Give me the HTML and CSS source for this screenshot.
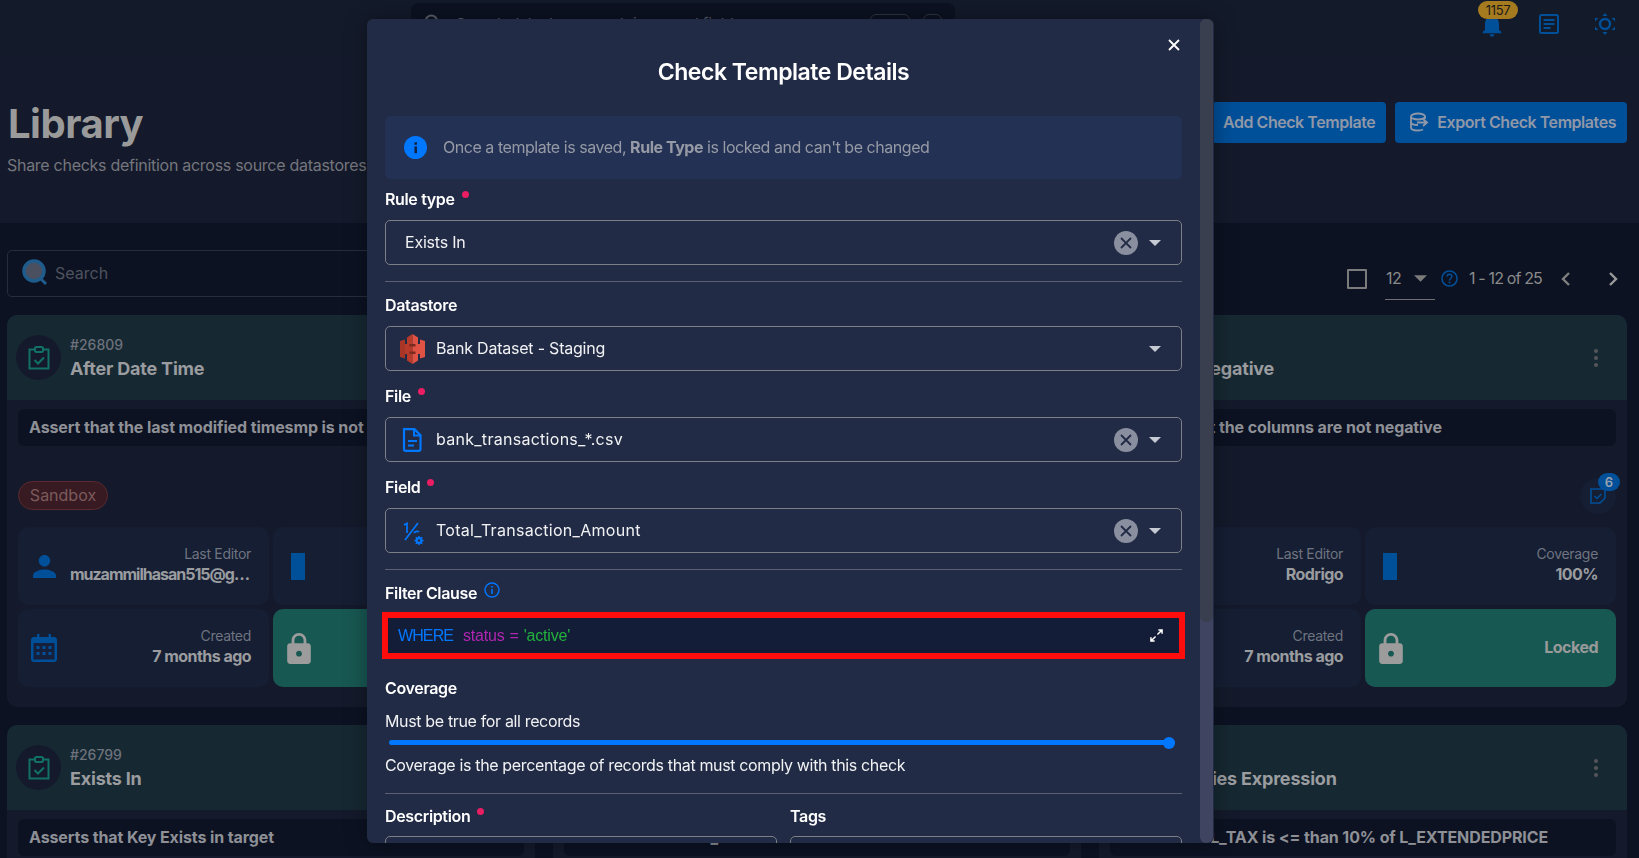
FILE: index.html
```html
<!DOCTYPE html>
<html lang="en">
<head>
    <meta charset="UTF-8">
    <meta name="viewport" content="width=device-width, initial-scale=1.0">
    <title>Library</title>
    <link rel="stylesheet" href="styles.css">
</head>
<body>
    <div class="page">
        <header class="topbar">
            <div class="global-search">
                <svg class="global-search-icon" viewBox="0 0 24 24" width="20" height="20"><circle cx="10" cy="10" r="7" fill="none" stroke="#5a5e69" stroke-width="2.4"/><path d="M15 15l6 6" stroke="#5a5e69" stroke-width="2.4"/></svg>
                <span class="global-search-text">Search datastores, containers and fields</span>
                <span class="kbd kbd-wide"></span>
                <span class="kbd"></span>
            </div>
            <div class="topbar-icons">
                <div class="bell">
                    <svg viewBox="0 0 24 24" width="28" height="28"><path fill="#004f99" d="M12 22c1.1 0 2-.9 2-2h-4c0 1.1.89 2 2 2zm6-6v-5c0-3.07-1.64-5.64-4.5-6.32V4c0-.83-.67-1.5-1.5-1.5s-1.5.67-1.5 1.5v.68C7.63 5.36 6 7.92 6 11v5l-2 2v1h16v-1l-2-2z"/></svg>
                    <span class="bell-badge">1157</span>
                </div>
                <svg class="doc-icon" viewBox="0 0 20 20" width="20" height="20"><rect x="1" y="1" width="18" height="18" rx="1.5" fill="none" stroke="#004f99" stroke-width="2"/><path d="M4.5 6h11M4.5 10h11M4.5 14h7" stroke="#004f99" stroke-width="2"/></svg>
                <svg class="sun-icon" viewBox="0 0 24 24" width="24" height="24"><circle cx="12" cy="12" r="5" fill="none" stroke="#004f99" stroke-width="2.4"/><path fill="#004f99" d="M12 1l2.5 3h-5zM12 23l-2.5-3h5zM2 6h3.5L2 9.5zM22 6h-3.5L22 9.500zM2 18h3.500L2 14.500zM22 18h-3.500L22 14.500z"/></svg>
            </div>
        </header>

        <section class="page-head">
            <div>
                <h1>Library</h1>
                <p class="subtitle">Share checks definition across source datastores</p>
            </div>
            <div class="head-actions">
                <button class="btn">Add Check Template</button>
                <button class="btn">
                    <svg viewBox="0 0 22 20" width="22" height="20"><ellipse cx="9" cy="4.500" rx="7" ry="3" fill="none" stroke="#9098a8" stroke-width="1.800"/><path d="M2 4.500v11c0 1.700 3 3 7 3 2 0 3.500-.3 5-1M2 10c0 1.700 3 3 7 3M16 4.500V7" fill="none" stroke="#9098a8" stroke-width="1.800"/><path d="M8 10.500h9M14 7l4 3.500-4 3.500" fill="none" stroke="#9098a8" stroke-width="1.800"/></svg>
                    Export Check Templates
                </button>
            </div>
        </section>

        <section class="toolbar">
            <div class="search">
                <svg viewBox="0 0 26 28" width="26" height="28"><circle cx="12" cy="12" r="10" fill="#4a5060"/><circle cx="12" cy="12" r="10" fill="none" stroke="#1f5c8c" stroke-width="3.500"/><path d="M19 20l5 5" stroke="#1f5c8c" stroke-width="3"/></svg>
                <span>Search</span>
            </div>
            <div class="controls">
                <span class="checkbox"></span>
                <div class="page-size"><span>12</span><svg viewBox="0 0 12 6" width="13" height="7"><path fill="#7b7b7b" d="M0 0h12L6 6z"/></svg></div>
                <svg class="help-icon" viewBox="0 0 18 18" width="17" height="17"><circle cx="9" cy="9" r="8" fill="none" stroke="#004f99" stroke-width="1.600"/><path d="M6.500 7c0-3.300 5-3.300 5 0 0 2-2.500 2-2.500 4" fill="none" stroke="#004f99" stroke-width="1.500"/><circle cx="9" cy="13.300" r="1" fill="#004f99"/></svg>
                <span class="range">1 - 12 of 25</span>
                <svg class="chev chev-prev" viewBox="0 0 10 14" width="10" height="14"><path d="M8 1L2 7l6 6" fill="none" stroke="#7f7f7f" stroke-width="2.400"/></svg>
                <svg class="chev chev-next" viewBox="0 0 10 14" width="10" height="14"><path d="M2 1l6 6-6 6" fill="none" stroke="#9a9a9a" stroke-width="2.400"/></svg>
            </div>
        </section>

        <section class="cards">
            <article class="card">
                <div class="card-head">
                    <div class="card-icon"><svg viewBox="0 0 22 24" width="22" height="24"><path d="M7 3.500H1.500v19h19v-19H15" fill="none" stroke="#127166" stroke-width="2"/><rect x="7" y="1" width="8" height="5" rx="1.500" fill="none" stroke="#127166" stroke-width="2"/><path d="M6.500 14l3.500 3.500 6-6" fill="none" stroke="#127166" stroke-width="2"/></svg></div>
                    <div class="card-heading"><div class="card-id">#26809</div><div class="card-title">After Date Time</div></div>
                </div>
                <div class="card-body">
                    <div class="card-desc">Assert that the last modified timesmp is not in the future</div>
                    <div class="tag-row"><span class="tag">Sandbox</span></div>
                    <div class="stats">
                        <div class="stat">
                            <svg viewBox="4 4 16 16" width="23" height="23"><path fill="#004f99" d="M12 12c2.210 0 4-1.790 4-4s-1.790-4-4-4-4 1.790-4 4 1.790 4 4 4zm0 2c-2.670 0-8 1.340-8 4v2h16v-2c0-2.660-5.330-4-8-4z"/></svg>
                            <div class="stat-text"><div class="stat-label">Last Editor</div><div class="stat-value stat-clip">muzammilhasan515@g…</div></div>
                        </div>
                        <div class="stat"><span class="bar-icon"></span></div>
                        <div class="stat stat-created">
                            <svg viewBox="0 0 26 28" width="26" height="28"><path fill="#004f99" d="M3 3h3V0h2.500v3h9V0H20v3h3c1.700 0 3 1.300 3 3v19c0 1.700-1.300 3-3 3H3c-1.700 0-3-1.300-3-3V6c0-1.700 1.300-3 3-3z"/><rect x="2.500" y="9" width="21" height="16.500" fill="#14203c"/><path fill="#004f99" d="M5.500 12h3v3h-3zM11.500 12h3v3h-3zM17.500 12h3v3h-3zM5.500 18h3v3h-3zM11.500 18h3v3h-3zM17.500 18h3v3h-3z"/></svg>
                            <div class="stat-text"><div class="stat-label">Created</div><div class="stat-value">7 months ago</div></div>
                        </div>
                        <div class="stat stat-locked">
                            <svg viewBox="4 1 16 21" width="24" height="31"><path fill="#9c9c9c" d="M18 8h-1V6c0-2.760-2.240-5-5-5S7 3.240 7 6v2H6c-1.100 0-2 .9-2 2v10c0 1.100.9 2 2 2h12c1.100 0 2-.9 2-2V10c0-1.100-.9-2-2-2zm-6 9c-1.100 0-2-.9-2-2s.9-2 2-2 2 .9 2 2-.9 2-2 2zm3.100-9H8.900V6c0-1.710 1.390-3.100 3.100-3.100 1.710 0 3.100 1.390 3.100 3.100v2z"/></svg>
                        </div>
                    </div>
                </div>
            </article>

            <article class="card"><div class="card-head"></div></article>

            <article class="card">
                <div class="card-head">
                    <div class="card-icon"><svg viewBox="0 0 22 24" width="22" height="24"><path d="M7 3.500H1.500v19h19v-19H15" fill="none" stroke="#127166" stroke-width="2"/><rect x="7" y="1" width="8" height="5" rx="1.500" fill="none" stroke="#127166" stroke-width="2"/><path d="M6.500 14l3.500 3.500 6-6" fill="none" stroke="#127166" stroke-width="2"/></svg></div>
                    <div class="card-heading"><div class="card-id">#26802</div><div class="card-title">Not Negative</div></div>
                    <div class="kebab"><i></i><i></i><i></i></div>
                </div>
                <div class="card-body">
                    <div class="card-desc">Asserts that the columns are not negative</div>
                    <div class="tag-row tag-row-end">
                        <div class="checks-icon">
                            <svg viewBox="0 0 16 16" width="16" height="16"><path d="M1 1h14v9l-5 5H1z" fill="none" stroke="#004f99" stroke-width="1.600"/><path d="M4.500 8l2.500 2.500L11.500 6" fill="none" stroke="#004f99" stroke-width="1.500"/></svg>
                            <span class="checks-badge">6</span>
                        </div>
                    </div>
                    <div class="stats">
                        <div class="stat">
                            <div class="stat-text"><div class="stat-label">Last Editor</div><div class="stat-value">Rodrigo</div></div>
                        </div>
                        <div class="stat">
                            <span class="bar-icon"></span>
                            <div class="stat-text"><div class="stat-label">Coverage</div><div class="stat-value">100%</div></div>
                        </div>
                        <div class="stat">
                            <div class="stat-text"><div class="stat-label">Created</div><div class="stat-value">7 months ago</div></div>
                        </div>
                        <div class="stat stat-locked">
                            <svg viewBox="4 1 16 21" width="24" height="31"><path fill="#9c9c9c" d="M18 8h-1V6c0-2.760-2.240-5-5-5S7 3.240 7 6v2H6c-1.100 0-2 .9-2 2v10c0 1.100.9 2 2 2h12c1.100 0 2-.9 2-2V10c0-1.100-.9-2-2-2zm-6 9c-1.100 0-2-.9-2-2s.9-2 2-2 2 .9 2 2-.9 2-2 2zm3.100-9H8.900V6c0-1.710 1.390-3.100 3.100-3.100 1.710 0 3.100 1.390 3.100 3.100v2z"/></svg>
                            <div class="stat-text">Locked</div>
                        </div>
                    </div>
                </div>
            </article>

            <article class="card">
                <div class="card-head">
                    <div class="card-icon"><svg viewBox="0 0 22 24" width="22" height="24"><path d="M7 3.500H1.500v19h19v-19H15" fill="none" stroke="#127166" stroke-width="2"/><rect x="7" y="1" width="8" height="5" rx="1.500" fill="none" stroke="#127166" stroke-width="2"/><path d="M6.500 14l3.500 3.500 6-6" fill="none" stroke="#127166" stroke-width="2"/></svg></div>
                    <div class="card-heading"><div class="card-id">#26799</div><div class="card-title">Exists In</div></div>
                </div>
                <div class="card-body"><div class="card-desc">Asserts that Key Exists in target</div></div>
            </article>

            <article class="card">
                <div class="card-head"></div>
                <div class="card-body"><div class="card-desc">Asserts that the L_ORDERKEY values match the source table</div></div>
            </article>

            <article class="card">
                <div class="card-head">
                    <div class="card-icon"><svg viewBox="0 0 22 24" width="22" height="24"><path d="M7 3.500H1.500v19h19v-19H15" fill="none" stroke="#127166" stroke-width="2"/><rect x="7" y="1" width="8" height="5" rx="1.500" fill="none" stroke="#127166" stroke-width="2"/><path d="M6.500 14l3.500 3.500 6-6" fill="none" stroke="#127166" stroke-width="2"/></svg></div>
                    <div class="card-heading"><div class="card-id">#26795</div><div class="card-title">Satisfies Expression</div></div>
                    <div class="kebab"><i></i><i></i><i></i></div>
                </div>
                <div class="card-body"><div class="card-desc">Assert that L_TAX is &lt;= than 10% of L_EXTENDEDPRICE</div></div>
            </article>
        </section>
    </div>

    <div class="modal">
        <div class="modal-content">
            <svg class="modal-close" viewBox="0 0 12 12" width="12" height="12"><path d="M1 1l10 10M11 1L1 11" stroke="#fff" stroke-width="1.800"/></svg>
            <h2>Check Template Details</h2>

            <div class="info-box">
                <svg viewBox="0 0 22 22" width="23" height="23"><circle cx="11" cy="11" r="11" fill="#0077ff"/><rect x="10" y="10" width="2.400" height="6.500" fill="#14203c"/><rect x="10" y="6" width="2.400" height="2.400" fill="#14203c"/></svg>
                <span>Once a template is saved, <b>Rule Type</b> is locked and can't be changed</span>
            </div>

            <div class="field field-first">
                <label>Rule type<i class="req"></i></label>
                <div class="select">
                    <span class="select-value">Exists In</span>
                    <svg class="clear" viewBox="0 0 24 24" width="24" height="24"><circle cx="12" cy="12" r="12" fill="#8a8f9f"/><path d="M7 7l10 10M17 7L7 17" stroke="#222b45" stroke-width="1.800"/></svg>
                    <svg class="caret" viewBox="0 0 12 6" width="12" height="6"><path fill="#c6cad3" d="M0 0h12L6 6z"/></svg>
                </div>
            </div>
            <hr class="divider">

            <div class="field field-after-rule">
                <label>Datastore</label>
                <div class="select">
                    <svg class="select-icon" viewBox="0 0 25 30" width="25" height="30"><path fill="#a83526" d="M0 7l5-1.500v19L0 23z"/><path fill="#e05243" d="M25 7l-5-1.500v19l5-1.500z"/><path fill="#b83a2b" d="M7 3.500L12.500 0v30L7 26.500zM5 10h2v10H5z"/><path fill="#e05243" d="M18 3.500L12.500 0v30l5.500-3.500zM18 10h2v10h-2z"/><path fill="#7a2a1e" d="M9.500 10h6v2.500h-6zM9.500 17.500h6V20h-6z"/></svg>
                    <span class="select-value">Bank Dataset - Staging</span>
                    <svg class="caret" viewBox="0 0 12 6" width="12" height="6"><path fill="#c6cad3" d="M0 0h12L6 6z"/></svg>
                </div>
            </div>

            <div class="field">
                <label>File<i class="req"></i></label>
                <div class="select">
                    <svg class="select-icon" viewBox="0 0 25 24" width="25" height="24"><path d="M4 1.200h10.500l6 6V21a1.800 1.800 0 0 1-1.800 1.800H5.800A1.800 1.800 0 0 1 4 21z" fill="none" stroke="#0077ff" stroke-width="2.200"/><path d="M14 1.500v6h6M8 13h9M8 17.500h6" fill="none" stroke="#0077ff" stroke-width="2"/></svg>
                    <span class="select-value select-value-wide">bank_transactions_*.csv</span>
                    <svg class="clear" viewBox="0 0 24 24" width="24" height="24"><circle cx="12" cy="12" r="12" fill="#8a8f9f"/><path d="M7 7l10 10M17 7L7 17" stroke="#222b45" stroke-width="1.800"/></svg>
                    <svg class="caret" viewBox="0 0 12 6" width="12" height="6"><path fill="#c6cad3" d="M0 0h12L6 6z"/></svg>
                </div>
            </div>

            <div class="field">
                <label>Field<i class="req"></i></label>
                <div class="select">
                    <svg class="select-icon select-icon-free" viewBox="0 0 25 24" width="25" height="24"><path d="M4 6l3-1.500V14M5 21L18 4M14 14c1-2 4-2 5-1" fill="none" stroke="#0077ff" stroke-width="1.700"/><circle cx="19" cy="21.500" r="2.400" fill="none" stroke="#0077ff" stroke-width="2.200"/><path d="M19 17v1.500M19 24.500V26M14.500 21.500H16M22 21.500h1.500M15.800 18.300l1 1M21.200 23.700l1 1M15.800 24.700l1-1M21.200 19.300l1-1" stroke="#0077ff" stroke-width="1.500"/></svg>
                    <span class="select-value select-value-wide">Total_Transaction_Amount</span>
                    <svg class="clear" viewBox="0 0 24 24" width="24" height="24"><circle cx="12" cy="12" r="12" fill="#8a8f9f"/><path d="M7 7l10 10M17 7L7 17" stroke="#222b45" stroke-width="1.800"/></svg>
                    <svg class="caret" viewBox="0 0 12 6" width="12" height="6"><path fill="#c6cad3" d="M0 0h12L6 6z"/></svg>
                </div>
            </div>
            <hr class="divider">

            <label class="filter-label">Filter Clause
                <svg viewBox="0 0 16 16" width="16" height="16"><circle cx="8" cy="8" r="7" fill="none" stroke="#0077ff" stroke-width="1.400"/><rect x="7.200" y="7" width="1.600" height="5" fill="#0077ff"/><rect x="7.200" y="4" width="1.600" height="1.700" fill="#0077ff"/></svg>
            </label>
            <div class="editor">
                <span class="sql-key">WHERE</span>
                <span class="sql-field">status</span>
                <span class="sql-op">=</span>
                <span class="sql-str">'active'</span>
                <svg class="expand" viewBox="0 0 14 14" width="13" height="13"><path d="M8 6l5-5M9 1h4v4" fill="none" stroke="#fff" stroke-width="1.600"/><path d="M6 8l-5 5M5 13H1V9" fill="none" stroke="#fff" stroke-width="1.600"/></svg>
            </div>

            <label class="coverage-label">Coverage</label>
            <p class="form-text coverage-must">Must be true for all records</p>
            <div class="slider"><div class="slider-track"></div><div class="slider-thumb"></div></div>
            <p class="form-text coverage-help">Coverage is the percentage of records that must comply with this check</p>
            <hr class="divider divider-coverage">

            <div class="form-row">
                <div><label>Description<i class="req"></i></label><div class="input-box"></div></div>
                <div><label>Tags</label><div class="input-box"></div></div>
            </div>
        </div>
        <div class="modal-scroll"><div class="modal-thumb"></div></div>
    </div>
</body>
</html>
```

FILE: styles.css
```css
* {
    box-sizing: border-box;
}

html, body {
    margin: 0;
    padding: 0;
    height: 100%;
    overflow: hidden;
}

body {
    font-family: Inter, "Open Sans", sans-serif;
    background-color: #0c1222;
    color: #9a9a9a;
}

.page {
    width: 1639px;
    height: 858px;
    overflow: hidden;
}

/* top bar */
.topbar {
    height: 55px;
    background-color: #131a2a;
    display: flex;
    padding-left: 411px;
    position: relative;
}

.global-search {
    width: 544px;
    height: 40px;
    margin-top: 3px;
    padding: 0 13px 0 8px;
    background-color: #0c1222;
    border-radius: 8px;
    display: flex;
    align-items: center;
    gap: 13px;
    color: #5a5e69;
    font-size: 15px;
}

.global-search-icon {
    margin-left: 4px;
}

.global-search-text {
    flex: 1;
}

.kbd {
    width: 19px;
    height: 18px;
    border: 1px solid #30353f;
    border-radius: 6px;
}

.kbd-wide {
    width: 40px;
}

.topbar-icons {
    position: absolute;
    right: 0;
    top: 0;
    display: flex;
    align-items: flex-start;
}

.bell {
    position: relative;
    width: 28px;
    height: 40px;
    margin-right: 33px;
    padding-top: 11px;
}

.bell-badge {
    position: absolute;
    left: 0;
    top: 1px;
    width: 40px;
    height: 18px;
    border-radius: 9px;
    background-color: #a67a1e;
    color: #1b1b1b;
    font-size: 13px;
    line-height: 18px;
    text-align: center;
    letter-spacing: -0.3px;
}

.doc-icon {
    margin-top: 14px;
    margin-right: 34px;
}

.sun-icon {
    margin-top: 12px;
    margin-right: 22px;
}

/* page heading */
.page-head {
    height: 168px;
    background-color: #141a2b;
    padding: 0 12px 0 7px;
    display: flex;
    justify-content: space-between;
}

h1 {
    margin: 45px 0 0 1px;
    font-size: 40px;
    line-height: 48px;
    font-weight: 700;
    color: #9a9a9a;
    letter-spacing: -0.5px;
}

.subtitle {
    margin: 6px 0 0;
    font-size: 16px;
    line-height: 22px;
    color: #74767d;
    letter-spacing: -0.28px;
}

.head-actions {
    display: flex;
    gap: 9px;
    margin-top: 47px;
}

.btn {
    height: 41px;
    border: none;
    border-radius: 4px;
    background-color: #004f99;
    color: #9098a8;
    font-family: inherit;
    font-size: 16px;
    font-weight: 600;
    letter-spacing: -0.45px;
    padding: 0 11px 2px;
    display: flex;
    align-items: center;
    gap: 6px;
}

.btn svg {
    margin-left: 3px;
}

/* search and paging */
.toolbar {
    height: 47px;
    margin: 27px 12px 0 7px;
    display: flex;
    justify-content: space-between;
}

.search {
    width: 1000px;
    height: 47px;
    border: 1px solid #272d3c;
    border-radius: 5px;
    display: flex;
    align-items: center;
    gap: 7px;
    padding: 0 0 2px 14px;
    color: #4e525e;
    font-size: 16px;
}

.controls {
    height: 45px;
    margin-top: 7px;
    padding-bottom: 2px;
    display: flex;
    align-items: center;
    font-size: 16px;
    letter-spacing: -0.5px;
    color: #8a8a8a;
}

.checkbox {
    width: 20px;
    height: 20px;
    border: 2px solid #7b7b7b;
    border-radius: 1px;
    margin-right: 18px;
}

.page-size {
    width: 50px;
    height: 43px;
    border-bottom: 1px solid #6f6f6f;
    display: flex;
    align-items: center;
    justify-content: space-between;
    padding: 0 8px 0 1px;
    margin-right: 6px;
}

.help-icon {
    margin-right: 11px;
}

.range {
    padding-bottom: 2px;
    letter-spacing: -0.85px;
}

.chev-prev {
    margin-left: 19px;
}

.chev-next {
    margin-left: 37px;
    margin-right: 9px;
}

/* cards */
.cards {
    margin: 18px 12px 0 7px;
    display: grid;
    grid-template-columns: repeat(3, 528px);
    grid-auto-rows: 392px;
    gap: 18px;
}

.card {
    background-color: #141a2b;
    border-radius: 10px;
    overflow: hidden;
}

.card-head {
    height: 85px;
    background-color: #162832;
    padding: 0 29px 0 9px;
    display: flex;
    align-items: center;
    gap: 9px;
}

.card-icon {
    width: 45px;
    height: 45px;
    border-radius: 50%;
    background-color: #141a2b;
    display: flex;
    align-items: center;
    justify-content: center;
}

.card-heading {
    padding-top: 2px;
}

.card-id {
    font-size: 14px;
    line-height: 18px;
    font-weight: 500;
    color: #6d727c;
}

.card-title {
    margin-top: 2px;
    font-size: 18px;
    line-height: 26px;
    font-weight: 700;
    letter-spacing: -0.2px;
    color: #9a9c9f;
}

.kebab {
    margin-left: auto;
    display: flex;
    flex-direction: column;
    gap: 3px;
}

.kebab i {
    width: 4px;
    height: 4px;
    border-radius: 50%;
    background-color: #55565a;
}

.card-body {
    padding: 9px 11px 20px;
}

.card-desc {
    height: 37px;
    padding: 0 11px;
    border-radius: 6px;
    background-color: #0c1222;
    font-size: 16px;
    line-height: 37px;
    font-weight: 700;
    letter-spacing: -0.11px;
    color: #8e9096;
    white-space: nowrap;
    overflow: hidden;
}

.tag-row {
    height: 29px;
    margin-top: 35px;
    display: flex;
    align-items: center;
}

.tag-row-end {
    justify-content: flex-end;
}

.tag {
    width: 90px;
    height: 29px;
    border: 1px solid #5a2a30;
    border-radius: 15px;
    background-color: #381a22;
    color: #7c5a5c;
    font-size: 16px;
    line-height: 27px;
    text-align: center;
}

.checks-icon {
    position: relative;
    width: 36px;
    height: 36px;
    border-radius: 50%;
    background-color: #151e33;
    display: flex;
    align-items: center;
    justify-content: center;
}

.checks-badge {
    position: absolute;
    right: -4px;
    top: -5px;
    width: 22px;
    height: 18px;
    border-radius: 9px;
    background-color: #004f99;
    color: #9aa2b0;
    font-size: 13px;
    font-weight: 600;
    line-height: 18px;
    text-align: center;
}

.stats {
    margin-top: 17px;
    display: grid;
    grid-template-columns: 251px 251px;
    grid-auto-rows: 78px;
    gap: 4px;
}

.stat {
    background-color: #151e33;
    border-radius: 10px;
    padding: 0 18px 0 15px;
    display: flex;
    align-items: center;
    justify-content: space-between;
}

.stat-created {
    padding-left: 13px;
}

.stat-text {
    margin-left: auto;
    padding-bottom: 3px;
    text-align: right;
    min-width: 0;
}

.stat-label {
    font-size: 14px;
    line-height: 20px;
    color: #6f7480;
    letter-spacing: -0.3px;
}

.stat-value {
    font-size: 16px;
    line-height: 21px;
    font-weight: 700;
    color: #9a9c9f;
    letter-spacing: -0.55px;
}

.stat-clip {
    margin-right: 2px;
    white-space: nowrap;
    letter-spacing: -1px;
}

.bar-icon {
    width: 14px;
    height: 27px;
    margin-left: 3px;
    background-color: #004f99;
}

.stat-locked {
    background-color: #185852;
    padding-left: 14px;
    font-size: 16px;
    font-weight: 700;
    letter-spacing: -0.5px;
}

/* modal */
.modal {
    position: fixed;
    left: 367px;
    top: 19px;
    width: 847px;
    height: 824px;
    background-color: #222b45;
    border-radius: 6px;
    box-shadow: 0 0 22px rgba(0, 0, 0, 0.35);
    overflow: hidden;
    display: flex;
}

.modal-content {
    position: relative;
    width: 833px;
    flex-shrink: 0;
    padding: 0 18px;
    color: #fff;
}

.modal-close {
    position: absolute;
    top: 20px;
    right: 20px;
}

.modal-scroll {
    width: 13px;
    background-color: #3f4560;
    border-radius: 6px;
}

.modal-thumb {
    height: 603px;
    background-color: #3a3f50;
    border-radius: 6px;
}

h2 {
    margin: 0;
    padding-top: 37px;
    font-size: 23px;
    line-height: 32px;
    font-weight: 600;
    text-align: center;
    letter-spacing: -0.47px;
}

.info-box {
    height: 63px;
    margin-top: 28px;
    padding: 0 20px 0 19px;
    background-color: #233154;
    border-radius: 5px;
    display: flex;
    align-items: center;
    gap: 16px;
    font-size: 16px;
    letter-spacing: -0.46px;
    color: #969aa5;
}

.info-box span {
    padding-bottom: 2px;
}

.info-box b {
    font-weight: 700;
}

label {
    display: block;
    font-size: 16px;
    line-height: 22px;
    font-weight: 600;
    letter-spacing: -0.35px;
}

.req {
    display: inline-block;
    width: 7px;
    height: 7px;
    margin-left: 7px;
    border-radius: 50%;
    background-color: #e91e63;
    vertical-align: 7px;
}

.field {
    margin-top: 15px;
}

.field-first {
    margin-top: 10px;
}

.field-after-rule {
    margin-top: 13px;
}

.field label {
    line-height: 20px;
    margin-bottom: 11px;
}

.select {
    height: 45px;
    padding: 0 20px 0 19px;
    border: 1px solid #7c7f88;
    border-radius: 5px;
    display: flex;
    align-items: center;
    font-size: 16px;
    letter-spacing: -0.22px;
    color: #f1f2f4;
}

.select-icon {
    margin-left: -5px;
    margin-right: 11px;
}

.select-icon-free {
    overflow: visible;
}

.select-value {
    flex: 1;
    padding-bottom: 2px;
}

.select-value-wide {
    letter-spacing: 0.28px;
}

.clear {
    margin-right: 11px;
}

.divider {
    margin: 16px 0 0;
    border: none;
    border-top: 1px solid #5b6070;
}

.divider-coverage {
    margin-top: 17px;
}

.filter-label {
    margin-top: 12px;
    display: flex;
    align-items: flex-start;
    gap: 7px;
}

.editor {
    height: 47px;
    margin: 8px -3px 0;
    padding: 0 16px 0 10px;
    border: 6px solid #ff0d0d;
    background-color: #141d38;
    display: flex;
    align-items: center;
    font-family: "Liberation Sans", Arial, sans-serif;
    font-size: 16px;
    letter-spacing: -0.2px;
    gap: 5px;
}

.sql-key {
    color: #0077ff;
    letter-spacing: -0.9px;
    margin-right: 5px;
}

.sql-field,
.sql-op {
    color: #b026b0;
}

.sql-str {
    color: #22b13c;
}

.expand {
    margin-left: auto;
}

.coverage-label {
    margin-top: 18px;
}

.form-text {
    margin: 0;
    font-size: 16px;
    line-height: 22px;
    letter-spacing: -0.35px;
    color: #f1f2f4;
}

.coverage-must {
    margin-top: 11px;
}

.coverage-help {
    margin-top: 5px;
}

.slider {
    position: relative;
    height: 12px;
    margin: 5px 0 0 4px;
    width: 786px;
}

.slider-track {
    position: absolute;
    left: 0;
    right: 0;
    top: 3px;
    height: 5px;
    border-radius: 3px;
    background-color: #0077ff;
}

.slider-thumb {
    position: absolute;
    right: 0;
    top: 0;
    width: 12px;
    height: 12px;
    border-radius: 50%;
    background-color: #0077ff;
}

.form-row {
    margin-top: 12px;
    display: grid;
    grid-template-columns: 392px 392px;
    gap: 13px;
}

.form-row label {
    line-height: 20px;
    margin-bottom: 3px;
}

.input-box {
    height: 60px;
    margin-top: 10px;
    border: 1px solid #7c7f88;
    border-radius: 5px;
}
```
